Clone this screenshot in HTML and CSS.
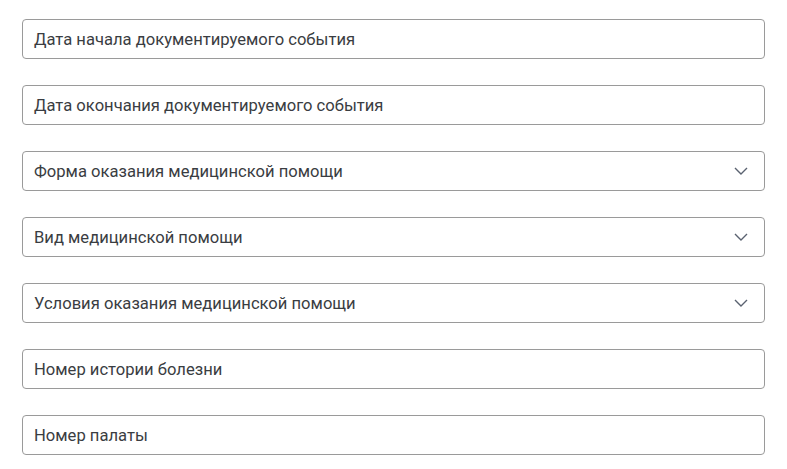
FILE: index.html
```html
<!DOCTYPE html>
<html lang="ru">
<head>
<meta charset="utf-8">
<link rel="stylesheet" href="styles.css">
</head>
<body>
<div class="form">
  <div class="field"><span class="label">Дата начала документируемого события</span></div>
  <div class="field"><span class="label">Дата окончания документируемого события</span></div>
  <div class="field select"><span class="label">Форма оказания медицинской помощи</span>
    <svg class="chev" width="14" height="8" viewBox="0 0 14 8"><path d="M1 1 L7 7 L13 1" fill="none" stroke="#5a6270" stroke-width="1.4"/></svg></div>
  <div class="field select"><span class="label">Вид медицинской помощи</span>
    <svg class="chev" width="14" height="8" viewBox="0 0 14 8"><path d="M1 1 L7 7 L13 1" fill="none" stroke="#5a6270" stroke-width="1.4"/></svg></div>
  <div class="field select"><span class="label">Условия оказания медицинской помощи</span>
    <svg class="chev" width="14" height="8" viewBox="0 0 14 8"><path d="M1 1 L7 7 L13 1" fill="none" stroke="#5a6270" stroke-width="1.4"/></svg></div>
  <div class="field"><span class="label">Номер истории болезни</span></div>
  <div class="field"><span class="label">Номер палаты</span></div>
</div>
</body>
</html>
```
FILE: styles.css
```css
html, body { margin: 0; padding: 0; background: #fff; }
body { font-family: Roboto, "Noto Sans", sans-serif; }
.form {
  display: flex;
  flex-direction: column;
  gap: 26px;
  padding: 19px 22px 0 22px;
  width: 743px;
}
.field {
  box-sizing: border-box;
  height: 40px;
  border: 1px solid #9a9a9a;
  border-radius: 4px;
  display: flex;
  align-items: center;
  justify-content: space-between;
  padding: 0 16px 0 11px;
}
.label {
  font-size: 16.6px;
  color: #3a3d42;
}
.chev { display: block; }
```
